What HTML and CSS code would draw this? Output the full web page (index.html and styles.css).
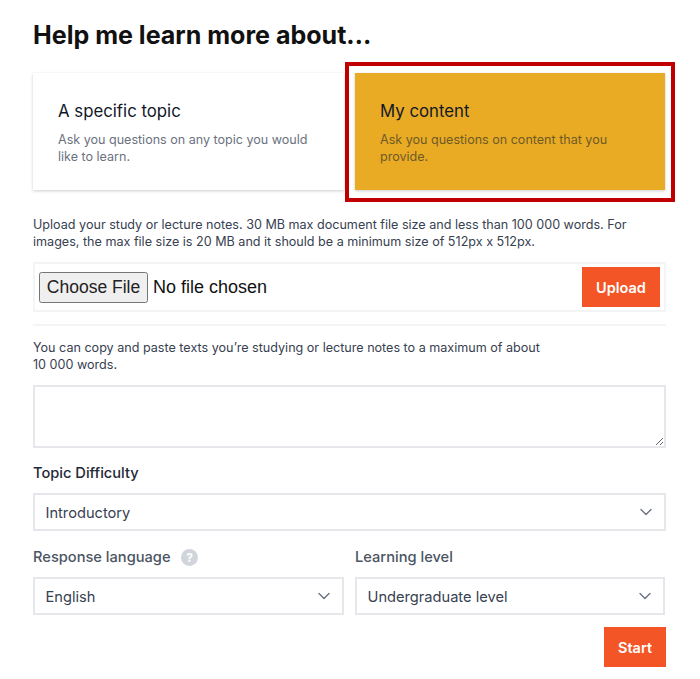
FILE: index.html
```html
<!DOCTYPE html>
<html lang="en">
<head>
<meta charset="utf-8">
<title>Help me learn more about</title>
<link rel="stylesheet" href="styles.css">
</head>
<body>
<main class="page">
  <h1 class="heading">Help me learn more about…</h1>
  <div class="cards">
    <div class="card">
      <h2 class="card-title">A specific topic</h2>
      <p class="card-text">Ask you questions on any topic you would like to learn.</p>
    </div>
    <div class="card card-active">
      <h2 class="card-title">My content</h2>
      <p class="card-text">Ask you questions on content that you provide.</p>
      <div class="highlight"></div>
    </div>
  </div>
  <p class="note note-upload">Upload your study or lecture notes. 30 MB max document file size and less than 100 000 words. For images, the max file size is 20 MB and it should be a minimum size of 512px x 512px.</p>
  <div class="upload-row">
    <input class="file" type="file">
    <button class="btn btn-upload" type="button">Upload</button>
  </div>
  <hr class="divider">
  <p class="note note-paste">You can copy and paste texts you’re studying or lecture notes to a maximum of about 10&nbsp;000 words.</p>
  <textarea class="text-input"></textarea>
  <div class="field field-topic">
    <label class="label label-strong">Topic Difficulty</label>
    <div class="select-wrap">
      <select class="select"><option>Introductory</option></select>
      <svg class="chevron" viewBox="0 0 12 8" width="12" height="8"><path d="M1 1.5l5 5 5-5" fill="none" stroke="#6b7280" stroke-width="1.4" stroke-linecap="round" stroke-linejoin="round"/></svg>
    </div>
  </div>
  <div class="two-col">
    <div class="field">
      <label class="label">Response language
        <svg class="help" viewBox="0 0 17 17" width="17" height="17"><circle cx="8.5" cy="8.5" r="8.5" fill="#d1d5db"/><text x="8.5" y="12.6" text-anchor="middle" class="help-mark">?</text></svg>
      </label>
      <div class="select-wrap">
        <select class="select"><option>English</option></select>
        <svg class="chevron" viewBox="0 0 12 8" width="12" height="8"><path d="M1 1.5l5 5 5-5" fill="none" stroke="#6b7280" stroke-width="1.4" stroke-linecap="round" stroke-linejoin="round"/></svg>
      </div>
    </div>
    <div class="field">
      <label class="label">Learning level</label>
      <div class="select-wrap">
        <select class="select"><option>Undergraduate level</option></select>
        <svg class="chevron" viewBox="0 0 12 8" width="12" height="8"><path d="M1 1.5l5 5 5-5" fill="none" stroke="#6b7280" stroke-width="1.4" stroke-linecap="round" stroke-linejoin="round"/></svg>
      </div>
    </div>
  </div>
  <div class="actions">
    <button class="btn btn-start" type="button">Start</button>
  </div>
</main>
</body>
</html>
```
FILE: styles.css
```css
* { box-sizing: border-box; }
html, body { margin: 0; padding: 0; background: #fff; }
body { font-family: Inter, "Liberation Sans", sans-serif; color: #111827; }
.page { width: 700px; height: 679px; overflow: hidden; padding: 21px 34px 0 33px; display: flex; flex-direction: column; }
.heading { margin: 0; font-size: 25.05px; line-height: 29px; font-weight: 700; color: #111; }
.cards { display: grid; grid-template-columns: 311px 310px; gap: 11px; margin-top: 23px; }
.card { position: relative; height: 117px; padding: 27px 25px 0; background: #fff; box-shadow: 0 1px 3px rgba(0,0,0,.2); }
.card-active { background: #eaab24; }
.card-title { margin: 0; font-size: 16.8px; line-height: 22px; font-weight: 400; color: #111827; }
.card-text { margin: 9px 0 0; font-size: 12.55px; line-height: 17px; color: #6b7280; }
.card-active .card-text { color: #6e5a28; }
.highlight { position: absolute; left: -10px; top: -11px; width: 330px; height: 140px; border: 4px solid #c00000; pointer-events: none; }
.note { margin: 0; font-size: 12.58px; line-height: 17px; color: #374151; }
.note-upload { margin-top: 26px; }
.upload-row { display: flex; align-items: center; justify-content: space-between; height: 50px; margin-top: 12px; padding: 0 4px 0 4px; border: 2px solid #f3f4f6; }
.file { font-family: "Liberation Sans", Arial, sans-serif; font-size: 18px; color: #111; }
.file::file-selector-button { width: 109px; height: 31px; margin-right: 5px; padding: 0; font-family: "Liberation Sans", Arial, sans-serif; font-size: 17.5px; color: #222; }
.btn { border: 0; border-radius: 0; background: #f45526; color: #fff; font-family: Inter, "Liberation Sans", sans-serif; font-size: 14.5px; font-weight: 600; padding: 0; }
.btn-upload { width: 78px; height: 40px; }
.divider { width: 100%; height: 2px; margin: 12px 0 0; border: 0; background: #f3f4f6; }
.note-paste { margin-top: 13px; width: 530px; }
.text-input { display: block; width: 100%; height: 63px; margin-top: 12px; border: 2px solid #e5e7eb; background: #fff; border-radius: 0; outline: 0; }
.field { display: flex; flex-direction: column; min-width: 0; }
.field-topic { margin-top: 15px; }
.label { display: flex; align-items: center; gap: 10px; font-size: 14.65px; line-height: 20px; font-weight: 500; color: #4b5563; }
.label-strong { color: #1f2937; }
.help { flex: none; }
.help-mark { font-family: Inter, "Liberation Sans", sans-serif; font-size: 12px; font-weight: 700; fill: #fff; }
.select-wrap { position: relative; margin-top: 10px; }
.select { display: block; width: 100%; height: 38px; padding: 2px 36px 0 10.5px; appearance: none; -webkit-appearance: none; border: 2px solid #e5e7eb; border-radius: 0; background: #fff; font-family: Inter, "Liberation Sans", sans-serif; font-size: 14.65px; color: #374151; }
.chevron { position: absolute; right: 14px; top: 15px; pointer-events: none; }
.two-col { display: grid; grid-template-columns: 311px 310px; gap: 11px; margin-top: 16px; }
.actions { display: flex; justify-content: flex-end; margin-top: 12px; }
.btn-start { width: 62px; height: 40px; }
```
